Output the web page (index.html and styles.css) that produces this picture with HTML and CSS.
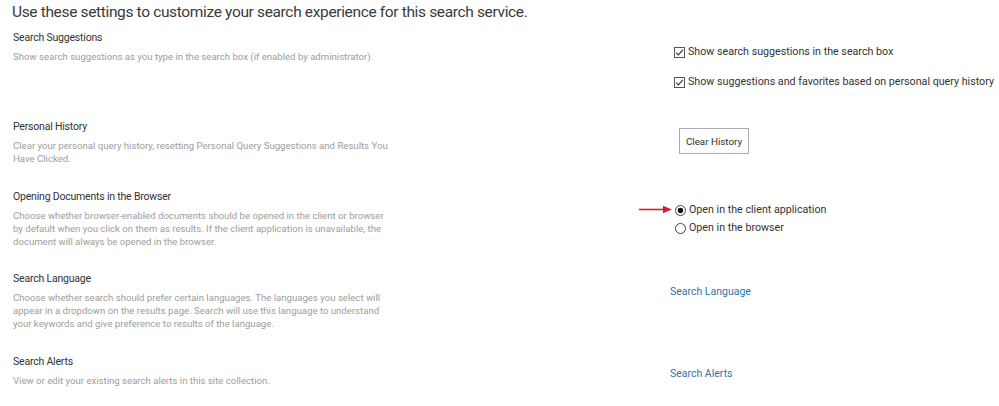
FILE: index.html
```html
<!DOCTYPE html>
<html>
<head>
<meta charset="utf-8">
<link rel="stylesheet" href="styles.css">
</head>
<body>
<div class="page">
  <h1 class="title">Use these settings to customize your search experience for this search service.</h1>

  <section class="row row-suggest">
    <div class="info">
      <h2 class="head">Search Suggestions</h2>
      <p class="desc">Show search suggestions as you type in the search box (if enabled by administrator).</p>
    </div>
    <div class="ctrl ctrl-checks">
      <label class="check">
        <svg class="box" width="11" height="11" viewBox="0 0 11 11"><rect x="0.5" y="0.5" width="10" height="10" fill="#fff" stroke="#555"/><path d="M2.2 5.6 L4.4 7.8 L8.8 2.8" fill="none" stroke="#333" stroke-width="1.2"/></svg>
        <span>Show search suggestions in the search box</span>
      </label>
      <label class="check">
        <svg class="box" width="11" height="11" viewBox="0 0 11 11"><rect x="0.5" y="0.5" width="10" height="10" fill="#fff" stroke="#555"/><path d="M2.2 5.6 L4.4 7.8 L8.8 2.8" fill="none" stroke="#333" stroke-width="1.2"/></svg>
        <span>Show suggestions and favorites based on personal query history</span>
      </label>
    </div>
  </section>

  <section class="row row-history">
    <div class="info">
      <h2 class="head">Personal History</h2>
      <p class="desc">Clear your personal query history, resetting Personal Query Suggestions and Results You Have Clicked.</p>
    </div>
    <div class="ctrl ctrl-button">
      <button class="btn" type="button">Clear History</button>
    </div>
  </section>

  <section class="row row-open">
    <div class="info">
      <h2 class="head">Opening Documents in the Browser</h2>
      <p class="desc">Choose whether browser-enabled documents should be opened in the client or browser by default when you click on them as results. If the client application is unavailable, the document will always be opened in the browser.</p>
    </div>
    <div class="ctrl ctrl-radios">
      <label class="radio radio-first">
        <svg class="arrow" width="34" height="9" viewBox="0 0 34 9"><path d="M0 4.5 H26" stroke="#d4202c" stroke-width="1.6"/><path d="M24 0.8 L33 4.5 L24 8.2 Z" fill="#d4202c"/></svg>
        <svg class="dot" width="11" height="11" viewBox="0 0 11 11"><circle cx="5.5" cy="5.5" r="5" fill="#fff" stroke="#444"/><circle cx="5.5" cy="5.5" r="2.7" fill="#111"/></svg>
        <span>Open in the client application</span>
      </label>
      <label class="radio">
        <svg class="dot" width="11" height="11" viewBox="0 0 11 11"><circle cx="5.5" cy="5.5" r="5" fill="#fff" stroke="#444"/></svg>
        <span>Open in the browser</span>
      </label>
    </div>
  </section>

  <section class="row row-lang">
    <div class="info">
      <h2 class="head">Search Language</h2>
      <p class="desc">Choose whether search should prefer certain languages. The languages you select will appear in a dropdown on the results page. Search will use this language to understand your keywords and give preference to results of the language.</p>
    </div>
    <div class="ctrl ctrl-link">
      <a class="link" href="#">Search Language</a>
    </div>
  </section>

  <section class="row row-alerts">
    <div class="info">
      <h2 class="head">Search Alerts</h2>
      <p class="desc">View or edit your existing search alerts in this site collection.</p>
    </div>
    <div class="ctrl ctrl-link ctrl-link-alerts">
      <a class="link" href="#">Search Alerts</a>
    </div>
  </section>
</div>
</body>
</html>
```
FILE: styles.css
```css
html, body {
  margin: 0;
  padding: 0;
  background: #fff;
}
body {
  font-family: Roboto, "Open Sans", "Liberation Sans", sans-serif;
  color: #333;
}
.page {
  padding: 0 0 0 13px;
  width: 986px;
}
.title {
  margin: 0 0 0 -1px;
  font-size: 15.5px;
  font-weight: 400;
  line-height: 24px;
  letter-spacing: -0.35px;
  color: #3a3a3a;
}
.row {
  display: grid;
  grid-template-columns: 657px 1fr;
}
.row-suggest { height: 89px; margin-top: 6px; }
.row-history { height: 70px; }
.row-open { height: 82px; }
.row-lang { height: 83px; }
.row-alerts { height: 50px; }
.info {
  width: 380px;
}
.head {
  margin: 0;
  font-size: 10.5px;
  font-weight: 400;
  line-height: 15px;
  letter-spacing: -0.2px;
  color: #333;
}
.desc {
  margin: 5px 0 0;
  font-size: 9.6px;
  line-height: 13px;
  color: #9d9d9d;
}
.ctrl {
  font-size: 10.7px;
  color: #333;
}
.ctrl-checks {
  padding-top: 15px;
  padding-left: 4px;
  display: flex;
  flex-direction: column;
  gap: 16px;
}
.check, .radio {
  display: flex;
  align-items: center;
  gap: 3px;
  line-height: 14px;
  white-space: nowrap;
}
.box, .dot {
  flex: none;
}
.ctrl-button {
  padding-top: 9px;
  padding-left: 9px;
}
.btn {
  font-family: inherit;
  font-size: 9.8px;
  color: #333;
  background: #fdfdfd;
  border: 1px solid #acacac;
  width: 70px;
  height: 26px;
  padding: 0;
}
.ctrl-radios {
  padding-top: 14px;
  padding-left: 5px;
  display: flex;
  flex-direction: column;
  gap: 4px;
}
.radio-first {
  position: relative;
}
.arrow {
  position: absolute;
  left: -36px;
  top: 2px;
}
.ctrl-link {
  padding-top: 14px;
}
.ctrl-link-alerts {
  padding-top: 13px;
}
.link {
  font-size: 10.5px;
  line-height: 14px;
  color: #2f74a8;
  text-decoration: none;
}
```
